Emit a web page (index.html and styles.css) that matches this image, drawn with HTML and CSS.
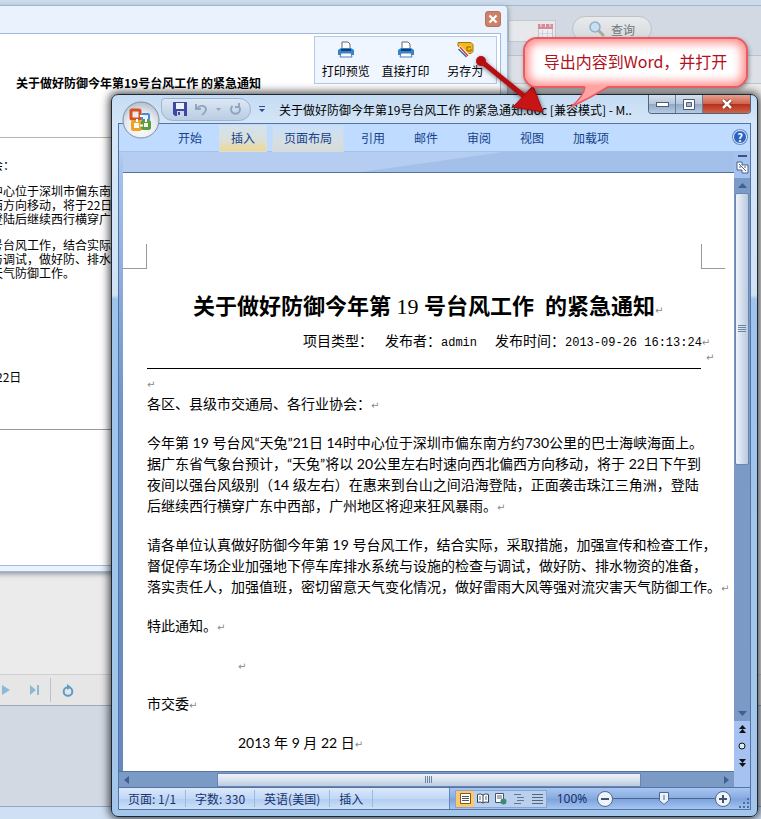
FILE: index.html
```html
<!DOCTYPE html>
<html lang="zh-CN">
<head>
    <meta charset="UTF-8">
    <meta name="viewport" content="width=device-width, initial-scale=1.0">
    <title>关于做好防御今年第19号台风工作 的紧急通知</title>
    <link rel="stylesheet" href="styles.css">
</head>
<body>
<div class="desktop">
    <!-- list page under the dialogs -->
    <div class="list-page">
        <div class="page-top"></div>
        <div class="search-bar">
            <div class="date-box">
                <svg width="15" height="16" viewBox="0 0 15 16"><rect x="0.5" y="2.5" width="14" height="13" fill="#eceff2" stroke="#c3c8cf"/><rect y="1" width="15" height="5" fill="#d98a98"/><path d="M3 0v4M7.5 0v4M12 0v4" stroke="#f3e3e6"/><path d="M4.500 7v8M9.500 7v8M1 10.500h13" stroke="#cfd4da"/></svg>
            </div>
            <button class="query-btn" type="button">
                <svg width="16" height="16" viewBox="0 0 16 16"><path d="M9 9l5 5" stroke="#b0a79a" stroke-width="3" stroke-linecap="round"/><circle cx="6" cy="6" r="5" fill="#c9dff0" stroke="#8fb0cc" stroke-width="1.500"/></svg>
                查询
            </button>
        </div>
        <div class="grid-head"></div>
        <div class="grid-body"></div>
        <div class="pager">
            <button type="button" aria-label="下一页"><svg width="8" height="10" viewBox="0 0 8 10"><path d="M0 0l8 5-8 5z" fill="#8dbad3"/></svg></button>
            <button type="button" aria-label="末页"><svg width="9" height="10" viewBox="0 0 9 10"><path d="M0 0l6 5-6 5zM7 0h2v10H7z" fill="#8dbad3"/></svg></button>
            <span class="pager-sep"></span>
            <button type="button" aria-label="刷新"><svg width="12" height="13" viewBox="0 0 12 13"><circle cx="6" cy="7.500" r="4.300" fill="none" stroke="#5b9cc4" stroke-width="2"/><path d="M5 0l4 3-4 3z" fill="#5b9cc4"/></svg></button>
        </div>
        <div class="page-bottom"></div>
        <div class="page-foot"></div>
    </div>

    <!-- preview dialog -->
    <section class="dialog">
        <header class="dialog-title">
            <button class="dialog-close" type="button" aria-label="关闭"><svg width="10" height="10" viewBox="0 0 10 10"><path d="M1.500 1.500l7 7M8.500 1.500l-7 7" stroke="#fff" stroke-width="2.200"/></svg></button>
        </header>
        <div class="dialog-body">
            <div class="notice-head">
                <h2>关于做好防御今年第19号台风工作 的紧急通知</h2>
                <div class="notice-tools">
                    <button type="button">
                        <svg width="16" height="17" viewBox="0 0 16 17"><path d="M4 8V1h6l2 2v5z" fill="#fff" stroke="#667"/><path d="M0 9l3-2h10l3 2v5H0z" fill="#2c86d6"/><path d="M3 8h10v2H3z" fill="#1b3c66"/><path d="M3 12h10l1 4H2z" fill="#fff" stroke="#4a7fb5"/></svg>
                        打印预览
                    </button>
                    <button type="button">
                        <svg width="16" height="17" viewBox="0 0 16 17"><path d="M4 8V1h6l2 2v5z" fill="#fff" stroke="#667"/><path d="M0 9l3-2h10l3 2v5H0z" fill="#2c86d6"/><path d="M3 8h10v2H3z" fill="#1b3c66"/><path d="M3 12h10l1 4H2z" fill="#fff" stroke="#4a7fb5"/></svg>
                        直接打印
                    </button>
                    <button type="button">
                        <svg width="17" height="17" viewBox="0 0 17 17"><path d="M1 1.500h13l2 2v7l-2 2H9L1 5z" fill="#f5b81c" stroke="#a6760b"/><path d="M10 6h4M10 6v4h4V8" fill="none" stroke="#8a5f08"/><path d="M2 6l9 9" stroke="#fff" stroke-width="4"/><path d="M1.500 8l8 8" stroke="#3568a8" stroke-width="1.500"/><path d="M3 6l8 9" stroke="#d83a2b" stroke-width="1.500"/></svg>
                        另存为
                    </button>
                </div>
            </div>
            <div class="notice-text">
                <p>会：</p>
                <p>中心位于深圳市偏东南<br>西方向移动，将于22日<br>登陆后继续西行横穿广</p>
                <p>号台风工作，结合实际<br>与调试，做好防、排水<br>天气防御工作。</p>
                <p class="notice-date">22日</p>
            </div>
        </div>
    </section>

    <!-- Word window -->
    <main class="word">
        <header class="word-title">
            <div class="orb">
                <svg width="38" height="38" viewBox="0 0 38 38">
                    <defs>
                        <radialGradient id="orbFill" cx="50%" cy="70%" r="70%"><stop offset="0" stop-color="#fff"/><stop offset="0.600" stop-color="#e6eaf0"/><stop offset="1" stop-color="#b4bdca"/></radialGradient>
                    </defs>
                    <circle cx="19" cy="19" r="18" fill="url(#orbFill)" stroke="#8190a5"/>
                    <g fill="none">
                        <rect x="9" y="9" width="9" height="9" rx="1" stroke="#d9501e" stroke-width="3"/>
                        <rect x="20" y="13" width="7" height="6" rx="1" stroke="#4a8bd0" stroke-width="2"/>
                        <rect x="10.500" y="20.500" width="8" height="8" rx="1" stroke="#f0a21c" stroke-width="3"/>
                        <rect x="20.500" y="20.500" width="7" height="7" rx="1" stroke="#5a9e3c" stroke-width="3"/>
                    </g>
                    <path d="M18 15h3M15 18v3M18 24.500h3M24 18v3" stroke="#fff" stroke-width="2"/>
                </svg>
            </div>
            <div class="quick-bar">
                <button type="button" aria-label="保存"><svg width="14" height="14" viewBox="0 0 14 14"><path d="M0 0h14v14H2l-2-2z" fill="#3f47a0"/><path d="M3 1h8v6H3z" fill="#eef3fb"/><path d="M4 9h7v5H4z" fill="#cdd8ee"/><path d="M5 10h2v3H5z" fill="#3f47a0"/></svg></button>
                <button type="button" aria-label="撤消"><svg width="13" height="13" viewBox="0 0 13 13"><path d="M1 1v5h5M2 5q5-4 8-1t-3 8" fill="none" stroke="#93a6bf" stroke-width="2"/></svg></button>
                <svg width="5" height="3" viewBox="0 0 5 3"><path d="M0 0h5L2.500 3z" fill="#93a6bf"/></svg>
                <button type="button" aria-label="恢复"><svg width="13" height="13" viewBox="0 0 13 13"><path d="M3.500 3a4.500 4.500 0 1 0 6 0M10 0v4H6" fill="none" stroke="#93a6bf" stroke-width="2"/></svg></button>
            </div>
            <svg class="quick-more" width="6" height="6" viewBox="0 0 6 6"><path d="M0 0h6v1H0zM0 3h6L3 6z" fill="#2d4f86"/></svg>
            <h1>关于做好防御今年第19号台风工作 的紧急通知.doc [兼容模式] - M..</h1>
            <div class="win-btns">
                <button type="button" aria-label="最小化"><svg width="13" height="5" viewBox="0 0 13 5"><rect x="0.500" y="0.500" width="12" height="4" fill="#fff" stroke="#4b5c75"/></svg></button>
                <button type="button" aria-label="还原"><svg width="12" height="11" viewBox="0 0 12 11"><path d="M.5.5h11v10H.5z" fill="#fff" stroke="#4b5c75"/><path d="M3.500 3.500h5v4h-5z" fill="#a9bdd6" stroke="#4b5c75"/></svg></button>
                <button class="win-close" type="button" aria-label="关闭"><svg width="12" height="10" viewBox="0 0 12 10"><path d="M2 1l8 8M10 1L2 9" stroke="#6b2a1d" stroke-width="4"/><path d="M2 1l8 8M10 1L2 9" stroke="#fff" stroke-width="2.500"/></svg></button>
            </div>
        </header>

        <div class="word-client">
            <nav class="ribbon-tabs">
                <button type="button">开始</button>
                <button class="hot" type="button">插入</button>
                <button class="fading" type="button">页面布局</button>
                <button type="button">引用</button>
                <button type="button">邮件</button>
                <button type="button">审阅</button>
                <button type="button">视图</button>
                <button type="button">加载项</button>
                <button class="help" type="button" aria-label="帮助">?</button>
            </nav>

            <div class="workspace">
                <div class="doc-col">
                    <div class="doc-gap"></div>
                    <article class="paper">
                        <div class="crop-marks"><span></span><span></span></div>
                        <div class="doc">
                            <h2 class="mark">关于做好防御今年第 <b>19</b> 号台风工作&nbsp; 的紧急通知</h2>
                            <div class="meta mark">
                                <span>项目类型：</span>
                                <span>发布者：<code>admin</code></span>
                                <span>发布时间：<code>2013-09-26 16:13:24</code></span>
                            </div>
                            <div class="rule mark"></div>
                            <div class="empty mark"></div>
                            <p class="mark">各区、县级市交通局、各行业协会：</p>
                            <p class="mark">今年第 19 号台风“天兔”21日 14时中心位于深圳市偏东南方约730公里的巴士海峡海面上。<br>据广东省气象台预计，“天兔”将以 20公里左右时速向西北偏西方向移动，将于 22日下午到<br>夜间以强台风级别（14 级左右）在惠来到台山之间沿海登陆，正面袭击珠江三角洲，登陆<br>后继续西行横穿广东中西部，广州地区将迎来狂风暴雨。</p>
                            <p class="mark">请各单位认真做好防御今年第 19 号台风工作，结合实际，采取措施，加强宣传和检查工作，<br>督促停车场企业加强地下停车库排水系统与设施的检查与调试，做好防、排水物资的准备，<br>落实责任人，加强值班，密切留意天气变化情况，做好雷雨大风等强对流灾害天气防御工作。</p>
                            <p class="mark">特此通知。</p>
                            <p class="mark indent"></p>
                            <p class="mark">市交委</p>
                            <p class="mark indent">2013 年 9 月 22 日</p>
                        </div>
                    </article>
                    <div class="hscroll">
                        <svg width="5" height="8" viewBox="0 0 5 8"><path d="M5 0v8L0 4z" fill="#3f5f94"/></svg>
                        <div class="hthumb"><i></i></div>
                        <svg width="5" height="8" viewBox="0 0 5 8"><path d="M0 0v8l5-4z" fill="#3f5f94"/></svg>
                    </div>
                </div>
                <div class="scroll-col">
                    <span class="split"></span>
                    <svg width="13" height="13" viewBox="0 0 13 13"><path d="M1 1h5v3h6v8H6V9H1z" fill="#fff" stroke="#4a6083"/><path d="M3 3l7 7M8 6h2M3 6h2" stroke="#4a6083"/></svg>
                    <div class="vscroll">
                        <svg width="9" height="5" viewBox="0 0 9 5"><path d="M0 5h9L4.500 0z" fill="#3f5f94"/></svg>
                        <div class="vthumb"><i></i></div>
                        <svg width="9" height="5" viewBox="0 0 9 5"><path d="M0 0h9L4.500 5z" fill="#3f5f94"/></svg>
                    </div>
                    <div class="browse">
                        <svg width="7" height="8" viewBox="0 0 7 8"><path d="M0 4l3.500-4L7 4zM0 8l3.500-4L7 8z" fill="#111"/></svg>
                        <svg width="8" height="8" viewBox="0 0 8 8"><circle cx="4" cy="4" r="3" fill="#dfe8f5" stroke="#111"/></svg>
                        <svg width="7" height="8" viewBox="0 0 7 8"><path d="M0 0l3.500 4L7 0zM0 4l3.500 4L7 4z" fill="#111"/></svg>
                    </div>
                </div>
            </div>

            <footer class="status">
                <span>页面: 1/1</span>
                <span>字数: 330</span>
                <span>英语(美国)</span>
                <span>插入</span>
                <div class="status-right">
                    <div class="views">
                        <button class="on" type="button" aria-label="页面视图"><svg width="11" height="11" viewBox="0 0 11 11"><path d="M.5.5h10v10H.5z" fill="#fff" stroke="#7b5a20"/><path d="M2 3.500h7M2 5.500h7M2 7.500h7" stroke="#555"/></svg></button>
                        <button type="button" aria-label="阅读版式"><svg width="12" height="11" viewBox="0 0 12 11"><path d="M.5 1.500Q3 0 6 2q3-2 5.500-.5v8Q9 8 6 10 3 8 .5 9.500zM6 2v8" fill="#fff" stroke="#345"/><path d="M2 4h2M2 6h2M8 4h2M8 6h2" stroke="#567"/></svg></button>
                        <button type="button" aria-label="Web版式"><svg width="12" height="12" viewBox="0 0 12 12"><path d="M.5.5h8v9h-8z" fill="#fff" stroke="#456"/><path d="M2 3h5M2 5h5" stroke="#567"/><circle cx="8.500" cy="8.500" r="3" fill="#3c8a78"/></svg></button>
                        <button type="button" aria-label="大纲"><svg width="11" height="11" viewBox="0 0 11 11"><path d="M0 1.500h7M3 4.500h7M3 7.500h7M0 10.500h7" stroke="#678"/></svg></button>
                        <button type="button" aria-label="普通"><svg width="11" height="11" viewBox="0 0 11 11"><path d="M0 1.500h11M0 4.500h11M0 7.500h11M0 10.500h11" stroke="#567"/></svg></button>
                    </div>
                    <span class="zoom-value">100%</span>
                    <button class="round" type="button" aria-label="缩小"><svg width="16" height="16" viewBox="0 0 16 16"><circle cx="8" cy="8" r="7.500" fill="#eef4fc" stroke="#50688f"/><path d="M4 8h8" stroke="#44536b" stroke-width="2"/></svg></button>
                    <div class="zoom-track">
                        <svg width="10" height="13" viewBox="0 0 10 13"><path d="M.5.5h9v8L5 12.500.5 8.500z" fill="#e8f1fc" stroke="#50688f"/><path d="M5 3v5" stroke="#50688f"/></svg>
                    </div>
                    <button class="round" type="button" aria-label="放大"><svg width="16" height="16" viewBox="0 0 16 16"><circle cx="8" cy="8" r="7.500" fill="#eef4fc" stroke="#50688f"/><path d="M4 8h8M8 4v8" stroke="#44536b" stroke-width="2"/></svg></button>
                    <svg class="grip" width="11" height="11" viewBox="0 0 11 11"><path d="M8 0h2v2H8zM8 4h2v2H8zM4 4h2v2H4zM8 8h2v2H8zM4 8h2v2H4zM0 8h2v2H0z" fill="#4a6fa8"/></svg>
                </div>
            </footer>
        </div>
    </main>

    <!-- annotation -->
    <svg class="arrow" width="80" height="66" viewBox="0 0 80 66">
        <circle cx="9" cy="8" r="5" fill="#b50d10"/>
        <path d="M9 8l44 36" stroke="#b50d10" stroke-width="5"/>
        <path d="M61 33L41 54l30 5z" fill="#c81414" stroke="#a00a0c"/>
    </svg>
    <div class="callout">
        <svg class="callout-tail" width="40" height="26" viewBox="0 0 40 26"><path d="M15 2Q14 12 1 23 20 14 38 2z" fill="#ffa3a3"/><path d="M15 3Q14 12 1 23 20 14 38 3" fill="none" stroke="#ec5a60" stroke-width="1.500"/></svg>
        <p>导出内容到Word，并打开</p>
    </div>
</div>
</body>
</html>
```
FILE: styles.css
```css
:root {
    --ui-font: "Noto Sans CJK SC", "Noto Sans", sans-serif;
    --tab-text: #15428b;
    --frame: #5374a6;
}

* {
    box-sizing: border-box;
    margin: 0;
    padding: 0;
}

body {
    font-family: var(--ui-font);
    font-size: 12px;
    color: #000;
}

button {
    font: inherit;
    color: inherit;
    background: none;
    border: 0;
}

svg {
    display: block;
    flex: none;
}

.desktop {
    position: relative;
    min-height: 100vh;
    overflow: hidden;
    display: flex;
}

/* list page */
.list-page {
    flex: 1;
    display: flex;
    flex-direction: column;
    background: #d2d9e3;
}

.page-top {
    height: 6px;
    background: #ccdaea;
    border-bottom: 1px solid #a9b6c6;
}

.search-bar {
    height: 50px;
    padding: 14px 0 0 508px;
    display: flex;
    align-items: flex-start;
    gap: 16px;
    border-bottom: 1px solid #b9c3d0;
}

.date-box {
    width: 48px;
    height: 22px;
    padding: 2px;
    display: flex;
    justify-content: flex-end;
    background: #e6e8eb;
    border: 1px solid #c0c7d1;
}

.query-btn {
    width: 80px;
    height: 26px;
    margin-top: -4px;
    display: flex;
    align-items: center;
    justify-content: center;
    gap: 6px;
    color: #70757c;
    background: linear-gradient(#e8eaec, #d5d8dc);
    border: 1px solid #bcc3cb;
    border-radius: 13px;
}

.grid-head {
    height: 28px;
    background: #dde1e7;
    border-bottom: 1px solid #bcc4cf;
}

.grid-body {
    flex: 1;
    background: #ebebeb;
}

.pager {
    height: 32px;
    padding-left: 2px;
    display: flex;
    align-items: center;
    gap: 20px;
    background: #e6e6e6;
    border-top: 1px solid #d0d0d0;
    border-bottom: 1px solid #94a9c4;
}

.pager-sep {
    width: 1px;
    height: 24px;
    margin: 0 -9px;
    background: #b4c4d4;
}

.page-bottom {
    height: 101px;
    border-bottom: 1px solid #8fa5c3;
}

.page-foot {
    height: 12px;
    background: #cfe0f4;
}

/* preview dialog */
.dialog {
    position: absolute;
    left: -10px;
    top: 5px;
    width: 518px;
    padding: 0 6px 5px 0;
    background: #eaf2fd;
    border: 1px solid #9db9d9;
    border-top-right-radius: 4px;
    box-shadow: 0 2px 5px rgba(80, 90, 110, 0.6);
}

.dialog-title {
    height: 28px;
    padding-top: 5px;
    display: flex;
    justify-content: flex-end;
    align-items: flex-start;
    border-bottom: 1px solid #9fbbdc;
}

.dialog-close {
    width: 16px;
    height: 16px;
    display: flex;
    align-items: center;
    justify-content: center;
    background: #cd8168;
    border: 1px solid #b8705a;
    border-radius: 3px;
}

.dialog-body {
    background: #fff;
    border-right: 1px solid #9fbbdc;
    border-bottom: 1px solid #9fbbdc;
}

.notice-head {
    height: 104px;
    padding: 2px 3px 0 25px;
    display: flex;
    justify-content: space-between;
    align-items: flex-start;
    border-bottom: 1px solid #b5b5ae;
}

.notice-head h2 {
    padding-top: 38px;
    font-size: 12px;
    line-height: 18px;
    white-space: nowrap;
}

.notice-tools {
    height: 48px;
    width: 183px;
    padding: 0 1px;
    display: flex;
    background: #f0f6ff;
    border: 1px solid #b4cbe6;
}

.notice-tools button {
    width: 60px;
    padding-top: 4px;
    display: flex;
    flex-direction: column;
    align-items: center;
    gap: 4px;
    line-height: 18px;
    white-space: nowrap;
}

.notice-text {
    min-height: 427px;
    padding-top: 20px;
    line-height: 14px;
}

.notice-text p {
    margin-bottom: 12px;
}

.notice-text .notice-date {
    height: 60px;
    margin-top: 90px;
    padding-left: 5px;
    border-bottom: 1px solid #9a9a9a;
}

/* Word window */
.word {
    position: absolute;
    inset: 94px 3px 2px 111px;
    padding: 0 6px 6px;
    display: flex;
    flex-direction: column;
    background: linear-gradient(#c4dcf4, #d5e6f7 30px, #d0e3f6 200px, #9ec4ec 204px, #a4c6ea);
    border: 1px solid #1c2733;
    border-radius: 7px;
    box-shadow: 0 0 8px 2px rgba(0, 0, 0, 0.7);
}

.word-title {
    height: 28px;
    padding-left: 43px;
    display: flex;
    align-items: center;
}

.orb {
    position: absolute;
    left: 10px;
    top: 6px;
}

.quick-bar {
    width: 90px;
    height: 23px;
    padding-left: 11px;
    display: flex;
    align-items: center;
    gap: 8px;
    background: linear-gradient(#dce7f4, #b9cde4);
    border: 1px solid #9db3cf;
    border-radius: 4px 12px 12px 12px;
}

.quick-more {
    margin: 0 14px 0 8px;
}

.word-title h1 {
    flex: 1;
    min-width: 0;
    font-size: 12px;
    font-weight: 400;
    white-space: nowrap;
    overflow: hidden;
}

.win-btns {
    align-self: flex-start;
    display: flex;
    border: 1px solid #53657e;
    border-top: 0;
    border-radius: 0 0 4px 4px;
    overflow: hidden;
}

.win-btns button {
    width: 27px;
    height: 18px;
    display: flex;
    align-items: center;
    justify-content: center;
    background: linear-gradient(#d5e0ec, #b6c6d9 50%, #92a9c5 51%, #b4cbe4);
    border-right: 1px solid #6b7d96;
}

.win-btns .win-close {
    width: 47px;
    border-right: 0;
    background: linear-gradient(#e5a08e, #d0614a 50%, #b5301a 51%, #d2634a);
}

.word-client {
    flex: 1;
    min-height: 0;
    display: flex;
    flex-direction: column;
    border: 1px solid var(--frame);
}

.ribbon-tabs {
    height: 28px;
    padding: 2px 3px 0 48px;
    display: flex;
    align-items: stretch;
    gap: 7px;
    color: var(--tab-text);
    background: #bfdbff;
    border-bottom: 1px solid #a5c1e8;
}

.ribbon-tabs button {
    padding: 0 11px 2px;
    white-space: nowrap;
}

.ribbon-tabs .hot {
    background: linear-gradient(#d3e2ee, #dcdfd6 60%, #f1d98c);
    box-shadow: 0 0 0 1px #d3dfe9;
}

.ribbon-tabs .fading {
    background: linear-gradient(#c8dffa, #d6dfe4 60%, #d8dcd6);
    box-shadow: 0 0 0 1px #cddcec;
}

.ribbon-tabs .help {
    width: 14px;
    height: 14px;
    margin: 4px 0 0 auto;
    padding: 0;
    font-size: 11px;
    font-weight: 700;
    line-height: 11px;
    color: #fff;
    background: #2c62c4;
    border: 1px solid #e4eefc;
    border-radius: 7px;
    box-shadow: 0 0 0 1px #6d8fc4;
}

.workspace {
    flex: 1;
    min-height: 0;
    display: flex;
    background: linear-gradient(#a9c4ec, #9dbcea);
}

.doc-col {
    flex: 1;
    min-width: 0;
    padding-left: 4px;
    display: flex;
    flex-direction: column;
    background: linear-gradient(#b3cdf1, #a3c0ea 25px, #6f94c8 260px, #6687bb);
}

.doc-gap {
    height: 21px;
    background: linear-gradient(172deg, #b4cdf0 50%, #a3c0ea 51%);
    border-bottom: 1px solid #54709c;
}

.paper {
    flex: 1;
    min-height: 0;
    background: #fff;
    overflow: hidden;
}

.crop-marks {
    height: 96px;
    padding-right: 9px;
    display: flex;
    justify-content: space-between;
    align-items: flex-end;
}

.crop-marks span {
    width: 24px;
    height: 25px;
    border: solid #999;
    border-width: 0 1px 1px 0;
}

.crop-marks span:last-child {
    border-width: 0 0 1px 1px;
}

.doc {
    padding: 22px 0 0 24px;
    font-family: Lato, "Noto Sans CJK SC", sans-serif;
    font-size: 14px;
    white-space: nowrap;
}

.mark::after {
    content: "↵";
    font-family: "DejaVu Sans", sans-serif;
    font-size: 10px;
    font-weight: 400;
    line-height: 1;
    color: #888;
}

.doc h2 {
    width: 570px;
    padding-left: 46px;
    font-family: "Liberation Serif", "Noto Sans CJK SC", serif;
    font-size: 22px;
    line-height: 32px;
}

.doc h2 b {
    font-weight: 400;
}

.meta {
    height: 22px;
    margin-top: 7px;
    padding-left: 156px;
    display: flex;
    align-items: baseline;
    line-height: 22px;
}

.meta span + span {
    margin-left: 12px;
}

.meta span:last-child {
    margin-left: 18px;
}

.meta code {
    font-family: "Liberation Mono", monospace;
    font-size: 12px;
}

.rule {
    height: 16px;
    margin-top: 1px;
    display: flex;
    gap: 5px;
}

.rule::before {
    content: "";
    width: 554px;
    border-bottom: 1px solid #000;
}

.empty {
    height: 20px;
    margin-top: 4px;
    line-height: 20px;
}

.doc p {
    min-height: 21px;
    margin-bottom: 18px;
    line-height: 21px;
}

.doc .indent {
    padding-left: 91px;
}

.hscroll {
    height: 16px;
    margin-left: -4px;
    padding: 0 5px;
    display: flex;
    align-items: center;
    background: #7b9ac6;
    border-top: 1px solid var(--frame);
}

.hthumb {
    width: 70%;
    height: 14px;
    margin: 0 auto 0 88px;
    display: flex;
    align-items: center;
    justify-content: center;
    background: linear-gradient(#eef3fa, #d8e2ef 50%, #bccbe0);
    border: 1px solid #6a85b0;
}

.hthumb i {
    width: 8px;
    height: 7px;
    background: repeating-linear-gradient(90deg, #7085a5 0 1px, transparent 1px 2px);
}

.scroll-col {
    width: 16px;
    display: flex;
    flex-direction: column;
    align-items: center;
    gap: 4px;
    background: #a5c2f0;
}

.split {
    width: 9px;
    height: 2px;
    margin-top: 3px;
    background: #37547f;
}

.vscroll {
    flex: 1;
    width: 16px;
    padding: 5px 0;
    display: flex;
    flex-direction: column;
    align-items: center;
    gap: 5px;
    background: #7b9ac6;
}

.vthumb {
    width: 14px;
    height: 51%;
    margin-bottom: auto;
    display: flex;
    align-items: center;
    justify-content: center;
    background: linear-gradient(90deg, #eef3fa, #d4dfed 50%, #b9c9df);
    border: 1px solid #6a85b0;
    border-radius: 2px;
}

.vthumb i {
    width: 8px;
    height: 8px;
    background: repeating-linear-gradient(#7085a5 0 1px, transparent 1px 2px);
}

.browse {
    height: 62px;
    display: flex;
    flex-direction: column;
    align-items: center;
    gap: 9px;
}

.status {
    height: 22px;
    display: flex;
    align-items: center;
    color: #15326b;
    background: linear-gradient(#dbe9fb, #c0d7f5 50%, #b0ccf1 51%, #cfe1f8);
    border-top: 1px solid var(--frame);
}

.status > span {
    padding: 0 9px;
    line-height: 17px;
    white-space: nowrap;
    border-right: 1px solid #9bb9e0;
}

.status-right {
    height: 21px;
    margin-left: auto;
    padding-left: 5px;
    display: flex;
    align-items: center;
    background: linear-gradient(#a9c6f1, #86aae0 50%, #7ba1dc 51%, #a6c5f0);
    border-left: 1px solid #6486bb;
}

.views {
    display: flex;
    background: #bad0ef;
    border: 1px solid #87a5d2;
}

.views button {
    width: 18px;
    height: 16px;
    display: flex;
    align-items: center;
    justify-content: center;
}

.views .on {
    background: #fbc86c;
}

.zoom-value {
    width: 50px;
    font-family: "Noto Sans", sans-serif;
    text-align: center;
}

.zoom-track {
    width: 102px;
    height: 13px;
    display: flex;
    justify-content: center;
    background: linear-gradient(#50688f, #50688f) center / 100% 1px no-repeat;
}

.grip {
    align-self: flex-end;
    margin-left: 8px;
}

/* annotation */
.arrow {
    position: absolute;
    left: 472px;
    top: 53px;
    filter: drop-shadow(1px 2px 2px rgba(0, 0, 0, 0.5));
}

.callout {
    position: absolute;
    left: 523px;
    top: 37px;
    width: 225px;
    height: 51px;
    padding-top: 10px;
    font-size: 16px;
    line-height: 24px;
    text-align: center;
    color: #b01020;
    white-space: nowrap;
    background: #fff;
    border: 2px solid #ec5a60;
    border-radius: 14px;
    box-shadow: inset 0 0 10px 4px #ff8c8c, 1px 2px 4px rgba(0, 0, 0, 0.35);
}

.callout-tail {
    position: absolute;
    left: 45px;
    top: 45px;
}
```
